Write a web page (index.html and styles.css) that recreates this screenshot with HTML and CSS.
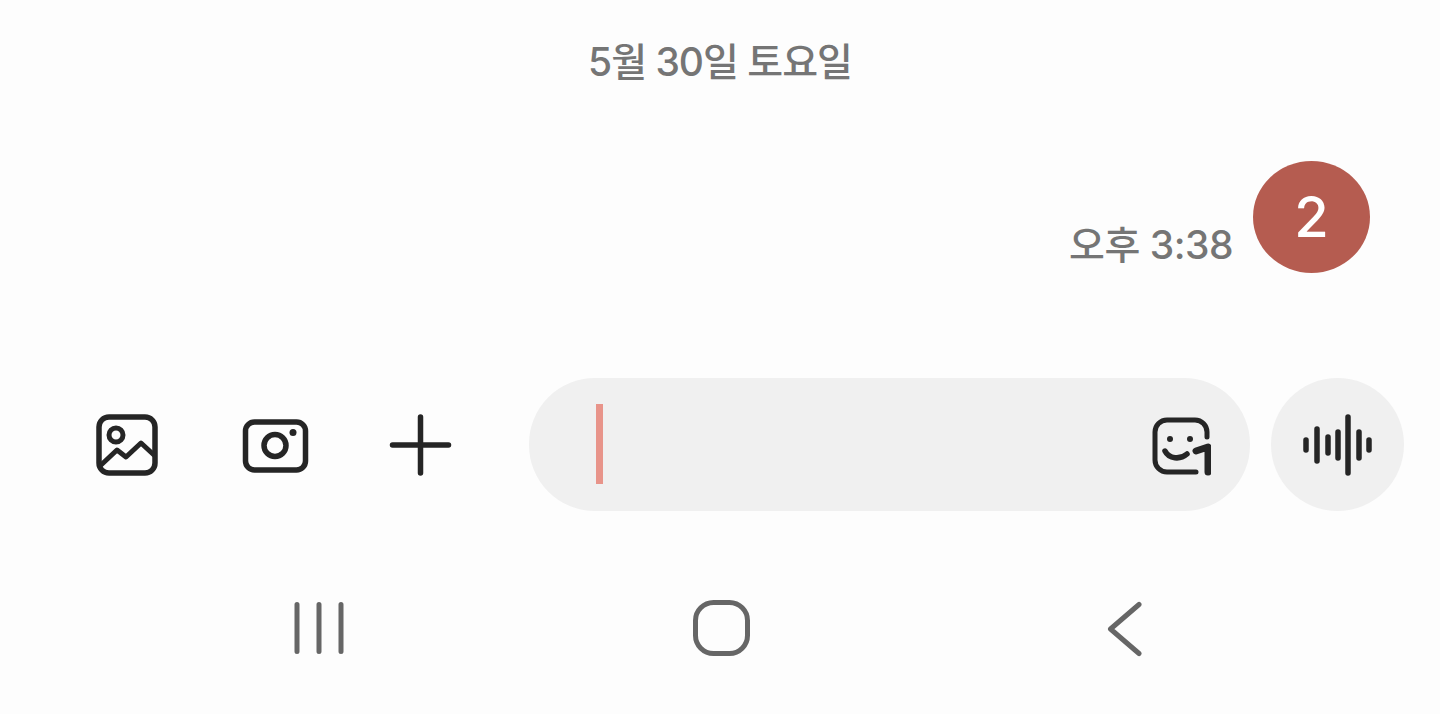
FILE: index.html
```html
<!DOCTYPE html>
<html lang="ko">
<head>
    <meta charset="UTF-8">
    <meta name="viewport" content="width=device-width, initial-scale=1.0">
    <title>메시지</title>
    <link rel="stylesheet" href="styles.css">
</head>
<body>
    <div class="date">5월 30일 토요일</div>

    <div class="message">
        <span class="time">오후 3:38</span>
        <div class="bubble">2</div>
    </div>

    <div class="composer">
        <div class="tools">
            <svg class="tool" viewBox="0 0 72 72">
                <rect x="8" y="8" width="56" height="56" rx="10" class="line"/>
                <circle cx="25" cy="26" r="7" class="line thin"/>
                <path d="M10 56 L26 41 L35 48 L50 34 L63 46" class="line thin"/>
            </svg>
            <svg class="tool" viewBox="0 0 72 72">
                <rect x="7.5" y="13" width="60" height="48" rx="9" class="line"/>
                <circle cx="37" cy="36.5" r="11" class="line"/>
                <circle cx="55" cy="23.5" r="3.5" class="dot"/>
            </svg>
            <svg class="tool" viewBox="0 0 72 72">
                <path d="M35.5 8 V64 M7.5 36 H63.5" class="line"/>
            </svg>
        </div>

        <div class="input">
            <span class="cursor"></span>
            <svg class="sticker" viewBox="0 0 62 62">
                <path d="M58 23 V18 A12 12 0 0 0 46 6 H18 A12 12 0 0 0 6 18 V46 A12 12 0 0 0 18 58 H47" class="line thin"/>
                <circle cx="21" cy="25" r="3" class="dot"/>
                <circle cx="41" cy="25" r="3" class="dot"/>
                <path d="M16 37 C20 45 31 46 38 40" class="line"/>
                <path d="M47 37 L59 33 V58" class="line bold"/>
            </svg>
        </div>

        <div class="voice">
            <svg class="wave" viewBox="0 0 72 64">
                <path d="M4 27 V37 M15 16 V48 M26 24 V40 M36 19 V45 M46 4 V60 M57 19 V45 M67 27 V37" class="line"/>
            </svg>
        </div>
    </div>

    <nav class="navbar">
        <svg class="nav-icon recents" viewBox="0 0 54 58">
            <path d="M5 4.5 V51.5 M27 4.5 V51.5 M49 4.5 V51.5" class="nav-line"/>
        </svg>
        <svg class="nav-icon home" viewBox="0 0 58 58">
            <rect x="3.5" y="2.5" width="52" height="51" rx="18" class="nav-line"/>
        </svg>
        <svg class="nav-icon back" viewBox="0 0 36 58">
            <path d="M32 4.5 L3.5 29 L32 53.5" class="nav-line"/>
        </svg>
    </nav>
</body>
</html>
```

FILE: styles.css
```css
* {
    box-sizing: border-box;
}
body {
    margin: 0;
    height: 714px;
    overflow: hidden;
    background-color: #fdfdfd;
    font-family: Inter, "Noto Sans CJK KR", sans-serif;
    display: flex;
    flex-direction: column;
}
.date {
    height: 161px;
    padding-top: 33px;
    text-align: center;
    font-size: 39px;
    font-weight: 500;
    letter-spacing: -1px;
    line-height: 58px;
    color: #757575;
}
.message {
    height: 217px;
    padding-right: 70px;
    display: flex;
    justify-content: flex-end;
    align-items: flex-start;
    gap: 20px;
}
.time {
    margin-top: 55px;
    font-size: 39px;
    font-weight: 500;
    letter-spacing: -0.5px;
    line-height: 58px;
    color: #757575;
}
.bubble {
    width: 117px;
    height: 112px;
    border-radius: 50%;
    background-color: #b55c50;
    color: #fff;
    font-size: 56px;
    font-weight: 500;
    display: flex;
    align-items: center;
    justify-content: center;
}
.composer {
    height: 133px;
    padding-left: 91px;
    display: flex;
    align-items: center;
}
.tools {
    width: 438px;
    display: flex;
    gap: 75px;
}
.tool {
    width: 72px;
    height: 72px;
}
.input {
    width: 721px;
    height: 133px;
    padding: 0 39px 0 67px;
    border-radius: 66px;
    background-color: #f0f0f0;
    display: flex;
    align-items: center;
    justify-content: space-between;
}
.cursor {
    width: 7px;
    height: 80px;
    margin-bottom: 2px;
    background-color: #e8948a;
}
.sticker {
    width: 62px;
    height: 62px;
}
.voice {
    width: 133px;
    height: 133px;
    margin-left: 21px;
    border-radius: 50%;
    background-color: #f0f0f0;
    display: flex;
    align-items: center;
    justify-content: center;
}
.wave {
    width: 72px;
    height: 64px;
}
.line {
    fill: none;
    stroke: #252525;
    stroke-width: 5.5;
    stroke-linecap: round;
    stroke-linejoin: round;
}
.line.thin {
    stroke-width: 5;
}
.line.bold {
    stroke-width: 7;
}
.dot {
    fill: #252525;
}
.navbar {
    height: 203px;
    padding-top: 89px;
    display: flex;
    align-items: flex-start;
}
.nav-icon {
    height: 58px;
}
.recents {
    width: 54px;
    margin-left: 292px;
}
.home {
    width: 58px;
    margin-left: 346px;
}
.back {
    width: 36px;
    margin-left: 357px;
}
.nav-line {
    fill: none;
    stroke: #666;
    stroke-width: 5;
    stroke-linecap: round;
    stroke-linejoin: round;
}
```
